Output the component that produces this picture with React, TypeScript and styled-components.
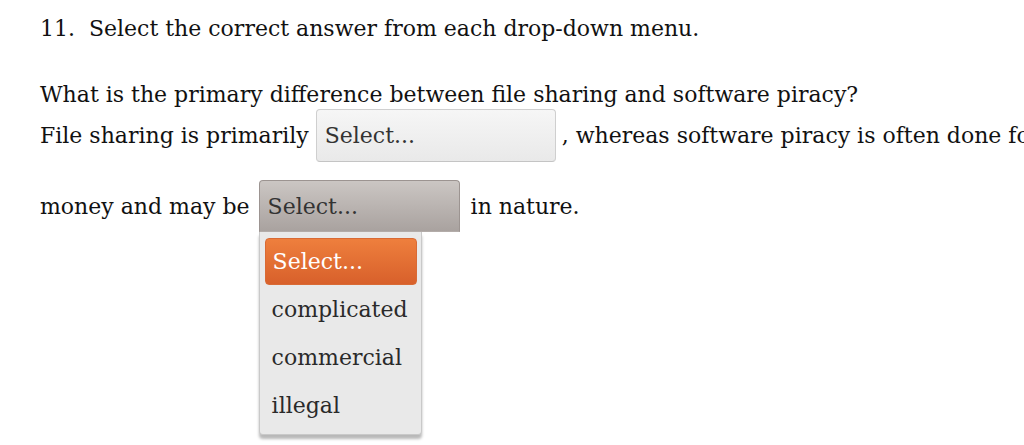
import React from "react";
import styled, { createGlobalStyle } from "styled-components";

const Global = createGlobalStyle`
  html, body { margin: 0; padding: 0; background: #fff; overflow: hidden; }
  body { width: 1024px; height: 445px; }
`;

const Page = styled.div`
  font-family: "DejaVu Serif", Georgia, serif;
  font-size: 22px;
  color: #111;
  padding: 13px 0 0 40px;
  white-space: nowrap;
`;

const Heading = styled.div`
  height: 30px;
  display: flex;
  align-items: center;
`;

const Question = styled.div`
  margin-top: 37px;
  height: 28px;
  display: flex;
  align-items: center;
`;

const Line = styled.div<{ $h: number; $mt: number }>`
  display: flex;
  align-items: center;
  height: ${(p) => p.$h}px;
  margin-top: ${(p) => p.$mt}px;
  position: relative;
  & > * { flex-shrink: 0; }
`;

const Text = styled.span`
  flex-shrink: 0;
`;

const SelectBox = styled.div<{ $w: number; $open?: boolean }>`
  box-sizing: border-box;
  flex-shrink: 0;
  width: ${(p) => p.$w}px;
  height: 100%;
  margin: 0 6px 0 ${(p) => (p.$open ? 9 : 7)}px;
  padding: 0 8px;
  display: flex;
  align-items: center;
  color: #333;
  border: 1px solid ${(p) => (p.$open ? "#9c9491" : "#cfcfcf")};
  border-bottom-color: ${(p) => (p.$open ? "#b3aca9" : "#c4c4c4")};
  border-radius: ${(p) => (p.$open ? "4px 4px 0 0" : "4px")};
  background: ${(p) =>
    p.$open
      ? "linear-gradient(#cbc6c3, #a9a29f)"
      : "linear-gradient(#f6f6f6, #e9e9e9)"};
`;

const Anchor = styled.div`
  position: relative;
  height: 100%;
  display: flex;
`;

const Menu = styled.ul`
  position: absolute;
  left: 9px;
  top: 100%;
  margin: 0;
  padding: 6px 4px 5px 5px;
  list-style: none;
  width: 163px;
  box-sizing: border-box;
  background: #e9e9e9;
  border: 1px solid #c9c9c9;
  border-top: none;
  border-radius: 0 0 4px 4px;
  box-shadow: 0 4px 3px rgba(0, 0, 0, 0.28);
`;

const Item = styled.li<{ $active?: boolean }>`
  height: ${(p) => (p.$active ? 47 : 48)}px;
  box-sizing: border-box;
  display: flex;
  align-items: center;
  padding-left: 7px;
  color: ${(p) => (p.$active ? "#fff" : "#2a2a2a")};
  border-radius: 4px;
  background: ${(p) =>
    p.$active ? "linear-gradient(#ee7f3d, #d8602b)" : "transparent"};
  border: ${(p) => (p.$active ? "1px solid #d96a35" : "none")};
`;

const After = styled.span`
  margin-left: 5px;
`;

export default function App() {
  return (
    <>
      <Global />
      <Page>
        <Heading>11.&nbsp; Select the correct answer from each drop-down menu.</Heading>
        <Question>What is the primary difference between file sharing and software piracy?</Question>
        <Line $h={53} $mt={1}>
          <Text>File sharing is primarily</Text>
          <SelectBox $w={240}>Select...</SelectBox>
          <Text>, whereas software piracy is often done for</Text>
        </Line>
        <Line $h={52} $mt={18}>
          <Text>money and may be</Text>
          <Anchor>
            <SelectBox $w={201} $open>Select...</SelectBox>
            <Menu>
              <Item $active>Select...</Item>
              <Item>complicated</Item>
              <Item>commercial</Item>
              <Item>illegal</Item>
            </Menu>
          </Anchor>
          <After>in nature.</After>
        </Line>
      </Page>
    </>
  );
}
